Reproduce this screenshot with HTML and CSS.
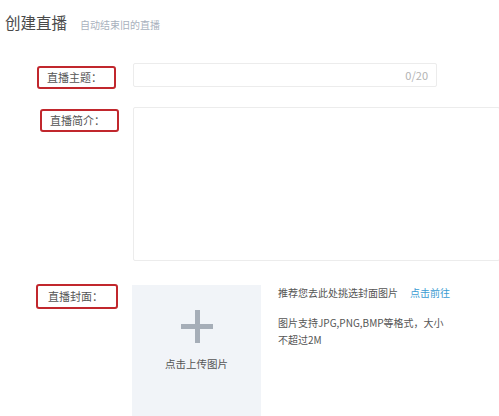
FILE: index.html
```html
<!DOCTYPE html>
<html lang="zh-CN">
<head>
    <meta charset="UTF-8">
    <meta name="viewport" content="width=device-width, initial-scale=1.0">
    <title>创建直播</title>
    <link rel="stylesheet" href="styles.css">
</head>
<body>
    <div class="page">
        <div class="page-header">
            <h1>创建直播</h1>
            <span class="sub-title">自动结束旧的直播</span>
        </div>
        <form class="live-form">
            <div class="form-row row-topic">
                <div class="label-col">
                    <label class="mark-label" for="topic">直播主题：</label>
                </div>
                <div class="input-wrap">
                    <input type="text" id="topic" maxlength="20">
                    <span class="counter">0/20</span>
                </div>
            </div>
            <div class="form-row row-intro">
                <div class="label-col">
                    <label class="mark-label" for="intro">直播简介：</label>
                </div>
                <textarea id="intro"></textarea>
            </div>
            <div class="form-row row-cover">
                <div class="label-col">
                    <label class="mark-label">直播封面：</label>
                </div>
                <div class="upload-box">
                    <span class="plus"></span>
                    <span class="upload-text">点击上传图片</span>
                </div>
                <div class="cover-tips">
                    <p class="pick">推荐您去此处挑选封面图片<a href="#" class="link">点击前往</a></p>
                    <p class="format">图片支持JPG,PNG,BMP等格式，大小不超过2M</p>
                </div>
            </div>
        </form>
    </div>
</body>
</html>
```

FILE: styles.css
```css
html, body {
    margin: 0;
    padding: 0;
    overflow: hidden;
    background: #ffffff;
}
body {
    font-family: "Noto Sans CJK SC", "Noto Sans", sans-serif;
    color: #555;
}
.page {
    width: 499px;
    height: 416px;
    overflow: hidden;
}
.page-header {
    display: flex;
    align-items: baseline;
    padding: 11px 0 0 5px;
    height: 41px;
    box-sizing: border-box;
}
.page-header h1 {
    margin: 0;
    font-size: 15.5px;
    font-weight: 400;
    color: #4a4a4a;
    line-height: 22px;
}
.sub-title {
    margin-left: 13px;
    font-size: 10px;
    color: #a9b1bd;
}
.live-form {
    padding-top: 22px;
}
.form-row {
    display: flex;
    align-items: flex-start;
}
.label-col {
    width: 133px;
    flex-shrink: 0;
}
.mark-label {
    display: inline-block;
    box-sizing: border-box;
    width: 79px;
    height: 23px;
    line-height: 19px;
    padding-left: 8px;
    border: 2px solid #c1272d;
    border-radius: 3px;
    font-size: 11px;
    color: #555;
    margin-left: 37px;
}
.input-wrap {
    position: relative;
    width: 304px;
}
.input-wrap input {
    display: block;
    width: 100%;
    height: 24px;
    box-sizing: border-box;
    border: 1px solid #ececec;
    border-radius: 2px;
    outline: none;
}
.counter {
    position: absolute;
    right: 9px;
    top: 0;
    line-height: 24px;
    font-size: 11px;
    color: #b3b3b3;
}
.row-intro {
    margin-top: 17px;
}
.row-intro .mark-label {
    margin-left: 40px;
}
.row-intro textarea {
    display: block;
    margin-top: 1px;
    width: 367px;
    height: 154px;
    box-sizing: border-box;
    border: 1px solid #ececec;
    border-radius: 2px;
    resize: none;
    flex-shrink: 0;
}
.row-cover {
    margin-top: 21px;
}
.row-cover .mark-label {
    width: 82px;
    height: 25px;
    line-height: 21px;
    margin-left: 36px;
    padding-left: 10px;
}
.upload-box {
    margin-top: 3px;
    margin-left: -1px;
    width: 129px;
    height: 140px;
    background: #f1f4f8;
    display: flex;
    flex-direction: column;
    align-items: center;
    flex-shrink: 0;
}
.plus {
    position: relative;
    width: 32px;
    height: 33px;
    margin-top: 25px;
}
.plus::before, .plus::after {
    content: "";
    position: absolute;
    background: #a6aeb8;
}
.plus::before {
    left: 0;
    top: 14px;
    width: 32px;
    height: 5px;
}
.plus::after {
    left: 14px;
    top: 0;
    width: 5px;
    height: 33px;
}
.upload-text {
    margin-top: 13px;
    font-size: 10.5px;
    color: #555;
}
.cover-tips {
    margin-left: 17px;
    margin-top: 2px;
    width: 172px;
    font-size: 10px;
    color: #555;
}
.cover-tips p {
    margin: 0;
    line-height: 17px;
}
.cover-tips .pick {
    white-space: nowrap;
}
.cover-tips .format {
    margin-top: 13px;
}
.link {
    margin-left: 12px;
    color: #3a9bd2;
    text-decoration: none;
}
```
